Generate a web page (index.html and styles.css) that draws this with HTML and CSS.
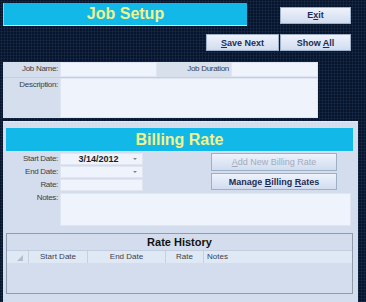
FILE: index.html
```html
<!DOCTYPE html>
<html lang="en">
<head>
    <meta charset="UTF-8">
    <title>Job Setup</title>
    <link rel="stylesheet" href="styles.css">
</head>
<body>
    <div class="page">
        <div class="header">
            <div class="title-row">
                <div class="banner job-banner">Job Setup</div>
                <button class="btn btn-exit">E<u>x</u>it</button>
            </div>
            <div class="action-row">
                <button class="btn btn-save"><u>S</u>ave Next</button>
                <button class="btn btn-show">Show <u>A</u>ll</button>
            </div>
        </div>

        <div class="job-panel">
            <div class="job-row">
                <div class="lbl">Job Name:</div>
                <div class="field job-name"></div>
                <div class="lbl lbl-duration">Job Duration</div>
                <div class="field job-duration"></div>
            </div>
            <div class="job-row desc-row">
                <div class="lbl">Description:</div>
                <div class="field desc"></div>
            </div>
        </div>

        <div class="billing-panel">
            <div class="banner billing-banner">Billing Rate</div>
            <div class="billing-body">
                <div class="billing-fields">
                    <div class="form-row">
                        <div class="lbl">Start Date:</div>
                        <div class="field date-field"><span class="date-val">3/14/2012</span><span class="arrow"></span></div>
                    </div>
                    <div class="form-row">
                        <div class="lbl">End Date:</div>
                        <div class="field date-field"><span class="arrow"></span></div>
                    </div>
                    <div class="form-row">
                        <div class="lbl">Rate:</div>
                        <div class="field date-field"></div>
                    </div>
                </div>
                <div class="billing-buttons">
                    <button class="btn btn-wide disabled"><u>A</u>dd New Billing Rate</button>
                    <button class="btn btn-wide">Manage <u>B</u>illing <u>R</u>ates</button>
                </div>
            </div>
            <div class="notes-row">
                <div class="lbl">Notes:</div>
                <div class="field notes"></div>
            </div>

            <div class="history">
                <div class="history-title">Rate History</div>
                <div class="history-head">
                    <div class="col col-ind"><span class="corner"></span></div>
                    <div class="col col-start">Start Date</div>
                    <div class="col col-end">End Date</div>
                    <div class="col col-rate">Rate</div>
                    <div class="col col-notes">Notes</div>
                </div>
                <div class="history-body"></div>
            </div>
        </div>
    </div>
</body>
</html>
```

FILE: styles.css
```css
body {
    margin: 0;
    font-family: "Liberation Sans", Arial, sans-serif;
    background-color: #081429;
    background-image: radial-gradient(circle, #15294b 0.8px, transparent 1.3px);
    background-size: 3px 3px;
}
.page {
    height: 100vh;
    padding: 3px 0 0 3px;
    box-sizing: border-box;
    display: flex;
    flex-direction: column;
}
.header {
    width: 348px;
}
.title-row {
    display: flex;
    justify-content: space-between;
    align-items: center;
}
.banner {
    background-color: #12b8e8;
    color: #f3f48a;
    font-weight: bold;
    font-size: 16px;
    text-align: center;
    box-sizing: border-box;
}
.job-banner {
    width: 244px;
    height: 23px;
    line-height: 22px;
    border-bottom: 1px solid #c8eefa;
    border-left: 1px solid #7fd3ef;
}
.action-row {
    display: flex;
    justify-content: flex-end;
    margin-top: 8px;
    gap: 1px;
}
.btn {
    font-family: "Liberation Sans", Arial, sans-serif;
    font-size: 9px;
    font-weight: bold;
    color: #1d2d55;
    background: linear-gradient(#eef3fc, #d0dcef);
    border: 1px solid #9eb0c8;
    padding: 0;
    box-sizing: border-box;
}
.btn-exit {
    width: 71px;
    height: 17px;
    margin-top: 1px;
}
.btn-save {
    width: 73px;
    height: 17px;
}
.btn-show {
    width: 71px;
    height: 17px;
}

/* job info panel */
.job-panel {
    width: 315px;
    height: 56px;
    flex-shrink: 0;
    margin-top: 11px;
    background-color: #d4deed;
    box-sizing: border-box;
}
.lbl {
    font-size: 8px;
    color: #3a3f4a;
    text-align: right;
    letter-spacing: -0.3px;
    white-space: nowrap;
}
.job-row {
    display: flex;
    height: 15px;
    border-bottom: 1px solid #c4cfe0;
}
.job-row .lbl {
    width: 55px;
    padding-right: 2px;
    line-height: 14px;
}
.field {
    background-color: #eef3fc;
    box-sizing: border-box;
    border: 1px solid #dfe6f2;
}
.job-name {
    width: 97px;
}
.job-row .lbl-duration {
    width: 74px;
    padding-right: 2px;
    box-sizing: border-box;
    background-color: #d8e0ec;
}
.job-duration {
    flex: 1;
}
.desc-row {
    height: 40px;
    border-bottom: none;
}
.desc {
    flex: 1;
}

/* billing panel */
.billing-panel {
    width: 355px;
    flex: 1;
    margin-top: 3px;
    padding: 6px 5px 0 3px;
    box-sizing: border-box;
    background-color: #d3ddee;
    border-top: 1px solid #e2e9f4;
}
.billing-banner {
    height: 23px;
    line-height: 23px;
}
.billing-body {
    display: flex;
    margin-top: 2px;
}
.billing-fields {
    width: 205px;
}
.form-row {
    display: flex;
    height: 12px;
    margin-bottom: 1px;
}
.form-row .lbl {
    width: 52px;
    padding-right: 2px;
    line-height: 12px;
}
.date-field {
    width: 83px;
    position: relative;
    text-align: center;
    font-size: 9px;
    line-height: 10px;
}
.date-val {
    font-weight: bold;
    color: #1a1d24;
    margin-right: 6px;
}
.arrow {
    position: absolute;
    right: 5px;
    top: 4px;
    border-left: 2px solid transparent;
    border-right: 2px solid transparent;
    border-top: 2px solid #7a8290;
}
.billing-buttons {
    display: flex;
    flex-direction: column;
    gap: 2px;
}
.btn-wide {
    width: 126px;
    height: 17px;
}
.btn-wide.disabled {
    color: #a3abbb;
    font-weight: normal;
    height: 18px;
}
.notes-row {
    display: flex;
    margin-top: 1px;
}
.notes-row .lbl {
    width: 52px;
    padding-right: 2px;
    line-height: 10px;
}
.notes {
    width: 291px;
    height: 33px;
}

/* rate history grid */
.history {
    margin-top: 7px;
    height: 61px;
    border: 1px solid #8f9aab;
    box-sizing: border-box;
}
.history-title {
    height: 16px;
    line-height: 16px;
    text-align: center;
    font-weight: bold;
    font-size: 11px;
    color: #111;
    border-bottom: 1px solid #c2cde0;
}
.history-head {
    display: flex;
    height: 12px;
    background-color: #dfe8f5;
    font-size: 8px;
    color: #3a3f4a;
    line-height: 12px;
}
.col {
    box-sizing: border-box;
    border-right: 1px solid #c5d0e0;
    text-align: center;
}
.col-ind {
    width: 22px;
    position: relative;
}
.corner {
    position: absolute;
    left: 10px;
    bottom: 2px;
    border-left: 6px solid transparent;
    border-bottom: 6px solid #b4bdca;
}
.col-start {
    width: 59px;
}
.col-end {
    width: 78px;
}
.col-rate {
    width: 38px;
}
.col-notes {
    flex: 1;
    border-right: none;
    text-align: left;
    padding-left: 3px;
}
```
